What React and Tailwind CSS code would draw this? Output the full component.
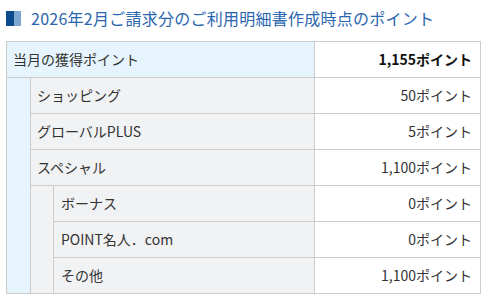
export default function App() {
  const sub = [
    { label: "ショッピング", value: "50ポイント" },
    { label: "グローバルPLUS", value: "5ポイント" },
    { label: "スペシャル", value: "1,100ポイント" },
  ];
  const special = [
    { label: "ボーナス", value: "0ポイント" },
    { label: "POINT名人．com", value: "0ポイント" },
    { label: "その他", value: "1,100ポイント" },
  ];
  const cell = "border border-[#cccccc] h-[36px] p-0 text-[14px]";

  return (
    <div
      className="w-[495px] h-[304px] bg-white text-[#333333]"
      style={{ fontFamily: '"Noto Sans CJK JP", "Noto Sans", sans-serif' }}
    >
      {/* HEADER */}
      <div className="flex items-center pl-[6px] pt-[11px] h-[26px]">
        <span className="w-[8px] h-[15px] bg-[#0b4a8b]" />
        <span className="w-[7px] h-[15px] bg-[#7ea6cf]" />
        <h2 className="ml-[10px] text-[16px] leading-[15px] tracking-[0.25px] text-[#2a66b0]">
          2026年2月ご請求分のご利用明細書作成時点のポイント
        </h2>
      </div>

      {/* TABLE */}
      <table className="ml-[6px] mt-[15px] w-[475px] border-collapse table-fixed">
        <colgroup>
          <col className="w-[24px]" />
          <col className="w-[23px]" />
          <col />
          <col className="w-[166px]" />
        </colgroup>
        <tbody>
          <tr>
            <td colSpan={3} className={`${cell} bg-[#e6f4fd] pl-[6px] text-left`}>
              当月の獲得ポイント
            </td>
            <td className={`${cell} bg-white pr-[8px] text-right font-bold text-[#111111]`}>
              1,155ポイント
            </td>
          </tr>
          {sub.map((s, i) => (
            <tr key={s.label}>
              {i === 0 && (
                <td rowSpan={6} className={`${cell} bg-[#e6f4fd]`} />
              )}
              <td colSpan={2} className={`${cell} bg-[#f1f2f4] pl-[6px] text-left`}>
                {s.label}
              </td>
              <td className={`${cell} bg-white pr-[8px] text-right`}>{s.value}</td>
            </tr>
          ))}
          {special.map((s, i) => (
            <tr key={s.label}>
              {i === 0 && (
                <td rowSpan={3} className={`${cell} bg-[#f1f2f4]`} />
              )}
              <td className={`${cell} bg-[#f1f2f4] pl-[7px] text-left`}>{s.label}</td>
              <td className={`${cell} bg-white pr-[8px] text-right`}>{s.value}</td>
            </tr>
          ))}
        </tbody>
      </table>
    </div>
  );
}
